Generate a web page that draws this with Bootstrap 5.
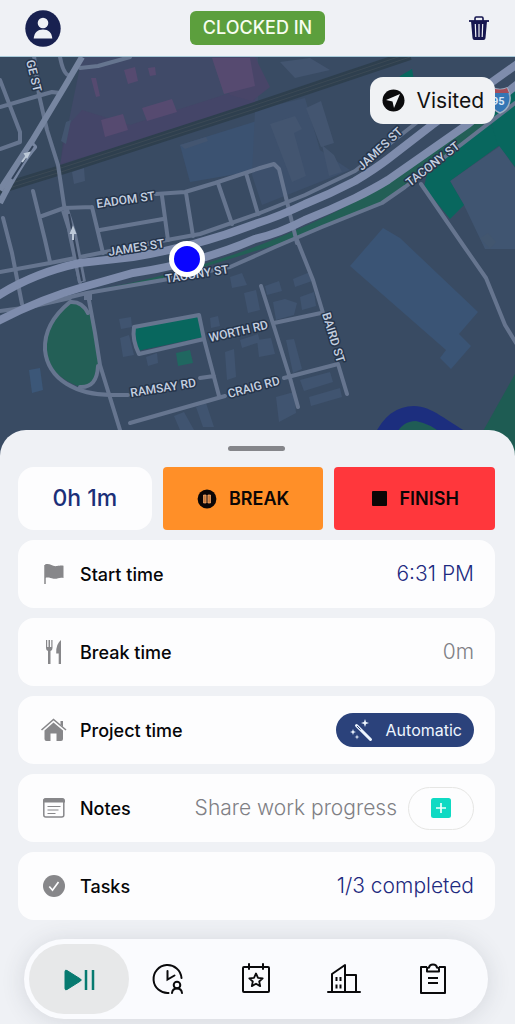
<!DOCTYPE html>
<html lang="en">
<head>
<meta charset="utf-8">
<meta name="viewport" content="width=device-width, initial-scale=1">
<title>Time clock</title>
<link href="https://cdn.jsdelivr.net/npm/bootstrap@5.3.0/dist/css/bootstrap.min.css" rel="stylesheet">
<style>
  body { background: #eff1f5; color: #060608; font-family: Inter, "Liberation Sans", sans-serif; }
  .top-bar { display: grid; grid-template-columns: 1fr auto 1fr; height: 57px; padding: 0 25px; border-bottom: 1px solid #a9cbda; }
  .icon-btn { background: none; border: 0; padding: 0; line-height: 0; color: inherit; }
  .status-pill { background: #5c9f3d; color: #f7fdf0; font-size: 18px; font-weight: 500; line-height: 34px; padding: 0 13px; border-radius: 6px; }
  .map-area { min-height: 300px; margin-bottom: -26px; background: #394b63; }
  .map-area > svg { position: absolute; inset: 0; width: 100%; height: 100%; }
  .visited { position: absolute; top: 20px; right: 20px; height: 47px; padding: 0 11px 0 12px; gap: 11px; border: 0; border-radius: 13px; background: #f0f2f4; color: #111; font-size: 21px; }
  .sheet { position: relative; background: #eff1f5; border-radius: 26px 26px 0 0; padding: 16px 20px 5px 18px; }
  .handle { width: 57px; height: 5px; border-radius: 3px; background: #85868a; }
  .clock-row { display: grid; grid-template-columns: 5fr 6fr 6fr; gap: 11px; }
  .clock-row > * { height: 63px; }
  .timer { background: #fdfdfe; border-radius: 16px; color: #1b2f78; font-size: 23px; font-weight: 500; }
  .clock-btn { border: 0; border-radius: 4px; font-size: 18px; font-weight: 600; gap: 12px; color: #0b0606; }
  .btn-break { background: #ff8f28; }
  .btn-finish { background: #ff373c; }
  .rows-list { gap: 10px; margin-top: 10px; }
  .info-row { height: 68px; border-radius: 16px; background: #fdfdfe; padding: 0 21px 0 22px; }
  .info-row > svg { flex: none; width: 28px; height: 28px; color: #87878a; }
  .info-label { margin-left: 12px; font-size: 18px; font-weight: 500; }
  .info-value { font-size: 21px; font-weight: 300; color: #1e2a80; }
  .muted-value { color: #808085; }
  .auto-btn { height: 34px; border: 0; border-radius: 17px; background: #2b427b; color: #eef6ff; font-size: 16px; padding: 0 12px; gap: 13px; }
  .add-btn { width: 66px; height: 43px; margin-left: 11px; border: 1px solid #e6e6e4; border-radius: 22px; background: #fdfdfe; padding: 0; line-height: 0; }
  .tab-bar { display: grid; grid-template-columns: repeat(5, 1fr); height: 80px; margin: 19px 7px 0 6px; padding: 5px 11px; border-radius: 40px; background: #fafbfe; box-shadow: 0 2px 24px rgba(60, 64, 75, .14); }
  .tab-bar button { border: 0; background: none; padding: 0; color: #0a0a0c; }
  .tab-bar .tab-on { margin: 0 -6px; border-radius: 35px; background: #e7e8e9; color: #077a70; }
  .street { font: 500 12px Roboto, sans-serif; fill: #c5d0e0; stroke: #26354a; stroke-width: 3px; stroke-linejoin: round; paint-order: stroke; }
</style>
</head>
<body>
<div class="d-flex flex-column min-vh-100">
  <header class="top-bar align-items-center">
    <button class="icon-btn justify-self-start me-auto" type="button" aria-label="Profile">
      <svg width="36" height="37" viewBox="0 0 36 37"><ellipse cx="18" cy="18.500" rx="17.700" ry="18.300" fill="#182150"/><circle cx="18" cy="13" r="5.300" fill="#eff1f5"/><path d="M8.700 28.500c.5-6 4-9 9.300-9s8.800 3 9.300 9z" fill="#eff1f5"/></svg>
    </button>
    <div class="status-pill">CLOCKED IN</div>
    <button class="icon-btn ms-auto" type="button" aria-label="Delete">
      <svg width="22" height="26" viewBox="0 0 22 26" fill="none" stroke="#16164f"><path d="M1 6h20" stroke-width="1.800"/><path d="M7 6V3.200Q7 2 8.200 2h5.600Q15 2 15 3.200V6" stroke-width="1.600"/><path d="M3 6h16l-1.500 17q-.2 2-2 2h-9q-1.800 0-2-2z" fill="#16164f" stroke="none"/><path d="M7.300 9l.5 13M11 9v13M14.700 9l-.5 13" stroke="#eff1f5" stroke-width="1.200"/></svg>
    </button>
  </header>

  <main class="map-area position-relative flex-grow-1 overflow-hidden">
    <svg viewBox="0 57 515 399" preserveAspectRatio="xMidYMin slice" role="img" aria-label="Map">
      <rect y="50" width="515" height="420" fill="#394b63"/>
      <!-- districts -->
      <path d="M0 57H260L200 108 0 188Z" fill="#37495f"/>
      <path d="M82 57H258V106L60 164Z" fill="#404a68"/>
      <path d="M64 130 82 110 130 125 255 85V108L60 168Z" fill="#473f67" opacity=".5"/>
      <path d="M212 57h43l15 30-18 14-22-6z" fill="#484568"/>
      <path d="M180 145 260 120V170L190 182Z" fill="#3b5271"/>
      <path d="M255 110 305 98 320 150 350 170 262 205 252 175Z" fill="#3d506c"/>
      <g fill="#564a70"><path d="M101 120l22-6 5 16-23 7zM212 58h38l5 28-31 8zM142 108l30-9 5 13-30 9zM124 70l11-3 3 14-10 3zM148 68l7-1 1 8-6 1zM91 78h5l4 18-4 1z"/></g>
      <g fill="#435570"><path d="M180 145l26-8 2 4-23 8zM270 124l25-8 7 13-8 4 12 43-14 6zM306 108l15-7 13 42-13 4zM322 145l12 10 8 17-13 4zM280 62l30-4 20 12-35 8zM72 172l12-4 1 13-11 3zM66 122l5-2-5 24-5-3z"/></g>
      <g fill="#405470"><path d="M119 319l12-2 1 10-11 2zM120 338l9-3 5 20-11 2zM230 277l12-4 5 12-15 3zM244 293l12-3 4 20-12 3zM265 286l14-5 3 10-15 4zM273 302l12-3 12 4-3 12-18 5zM293 279l17-7 2 9-17 6zM300 297l14-5 2 14-14 4zM257 340l14-2 4 16-16 3zM286 340l8-1 8 30-9 4zM276 397l18-5 2 21-17 9zM300 380l30-8 3 10-29 9zM309 397l31-9 2 9-31 9zM225 352l9-3 2 28-9 3zM240 340l18-6 2 8-18 6zM174 416l10-4 10 18h-14zM196 407l10-4 8 24h-11zM210 318l8-2 2 10-9 2zM146 357l11-4 1 10-10 3z"/></g>
      <path d="M29 370l11-2 3 22-11 3z" fill="#3c5778"/>
      <path d="M350 266 383 228 400 238 478 312 459 334 471 346 451 369 440 358 446 350Z" fill="#3a5475"/>
      <path d="M450 181 500 146 515 168V249H485L464 205Z" fill="#405571"/>
      <path d="M480 238l8-5 8 9-6 7z" fill="#42566f"/>
      <!-- parks -->
      <path d="M430 160 490 121 500 145 450 181 464 205 450 219 424 187Z" fill="#08675e"/>
      <path d="M490 118 515 90V167L497 143Z" fill="#08675e"/>
      <path d="M400 76 412 69 414 80H398Z" fill="#08675e"/>
      <path d="M95 290Q190 273 270 241T395 177L470 122 490 118 462 146 405 188 380 203 275 245 165 279Z" fill="#235f56"/>
      <path d="M70 302C54 315 44 330 45 350Q48 375 80 387 97 386 98 366V340L90 313Q83 301 70 302Z" fill="#235f56"/>
      <path d="M134 327 199 315 204 337 137 351Z" fill="#08675e"/>
      <path d="M176 353l14-3 3 13-15 3z" fill="#18705f" opacity=".75"/>
      <path d="M374 436Q388 406 414 406C432 406 446 421 474 436V456H370Z" fill="#1c2e7e"/>
      <path d="M395 436Q402 421 416 421 431 424 442 434V456H390Z" fill="#1f5c55"/>
      <path d="M515 374 478 440V460H515Z" fill="#1e5c53"/>
      <!-- rail line -->
      <g fill="none"><path d="M-4 190 64 169 255 107 410 55" stroke="#2e3f4e" stroke-width="10"/><path d="M-4 188 64 167 255 105 410 53M-4 192 64 171 255 109 410 57" stroke="#3b4955" stroke-width="1"/></g>
      <!-- local streets -->
      <g fill="none" stroke="#66758f" stroke-width="4" stroke-linecap="round" stroke-linejoin="round">
        <path d="M0 107 38 96 52 92 60 93M0 80 20 132V142L0 149M60 57Q63 73 68 75M80 68 98 66 130 57M34 56 39 95 47 130 58 165 64 205 76 248 83 280"/>
        <path d="M42 216 64 208 92 207M33 191 45 240 50 262M3 218 12 253 22 304M92 207 103 253M100 230 163 219M156 194 185 192 215 183 260 168 274 164 279 169 297 243M162 196 168 240M186 193 193 236M218 183 232 224M246 173 258 214M66 210 70 235 80 282"/>
        <path d="M0 272 50 263 100 253 167 240 200 234 260 213 305 195 355 171 420 120"/>
        <path d="M50 302 87 293 163 280 230 267 275 247 322 227 382 203 405 187 462 144 515 103"/>
        <path d="M0 311 30 307 70 298M88 295 95 333 100 365 120 430"/>
        <path d="M88 313Q82 301 70 302C54 315 44 330 45 350 48 380 77 395 112 395H128M80 387Q97 388 98 366"/>
        <path d="M134 327 199 315 204 339 139 354Q132 340 134 327ZM204 339 219 396M200 378 214 376M130 423 225 396"/>
        <path d="M261 286 275 330 290 378 298 407M297 240 313 280 323 313M274 323 321 313M284 378 338 364M338 364 347 394M421 184 463 245 486 278 505 325 516 343"/>
      </g>
      <g fill="none" stroke="#7786a1" stroke-width="6" stroke-linejoin="round"><path d="M82 57 65 86 32 141 0 190"/><path d="M30 143 34 147Q20 163 0 203"/></g>
      <g fill="none" stroke="#66758f" stroke-width="8"><path d="M65 210 73 235 82 282M88 293V300"/></g>
      <path d="M33 146 12 179M69 214 82 281" stroke="#33435a" stroke-width="2"/>
      <!-- highway -->
      <g fill="none" stroke="#7e8cac" stroke-width="8"><path d="M-4 297Q33 273 80 263L133 257Q195 247 255 224 280 216 305 204 330 194 355 181 375 169 388 159L432 125 520 62"/><path d="M-4 322Q43 298 83 287L133 273Q200 263 255 239 280 233 305 220 330 210 355 198 375 188 388 180L468 124 520 82"/></g>
      <path d="M22 162l5-7M73 240v-9M25 154l4-1-2 4zM73 228l-2 5h4z" stroke="#bdc9d8" stroke-width="2" fill="none"/>
      <!-- interstate shield -->
      <path d="M493 88q7 3 14 0 5 8 2 16-2 6-9 9-7-3-9-9-2-8 2-16z" fill="#3476b5" stroke="#a1b0c3" stroke-width="1.500"/><path d="M493 88q7 3 14 0l2 5h-18z" fill="#a54d59"/><text x="492" y="105" font-family="Roboto, sans-serif" font-weight="700" font-size="11" fill="#dae7f5">95</text>
      <g class="street">
        <text transform="translate(97 208) rotate(-8)">EADOM ST</text>
        <text transform="translate(109 256) rotate(-9)">JAMES ST</text>
        <text transform="translate(166 283) rotate(-9)">TACONY ST</text>
        <text transform="translate(362 171) rotate(-43)">JAMES ST</text>
        <text transform="translate(410 187) rotate(-38)">TACONY ST</text>
        <text transform="translate(210 342) rotate(-13)">WORTH RD</text>
        <text transform="translate(131 397) rotate(-9)">RAMSAY RD</text>
        <text transform="translate(229 398) rotate(-15)">CRAIG RD</text>
        <text transform="translate(322 314) rotate(73)">BAIRD ST</text>
        <text transform="translate(26 61) rotate(76)">GE ST</text>
      </g>
      <circle cx="187" cy="259" r="15.500" fill="#0a05ff" stroke="#fff" stroke-width="5"/>
    </svg>
    <button class="visited d-flex align-items-center" type="button">
      <svg width="23" height="23" viewBox="0 0 23 23"><circle cx="11.500" cy="11.500" r="11" fill="#0b0b0c"/><path d="M18 5 4 11l6.500 1.500L12 19z" fill="#f0f2f4"/></svg>
      Visited
    </button>
  </main>

  <section class="sheet">
    <div class="handle mx-auto"></div>
    <div class="clock-row mt-3">
      <div class="timer d-flex align-items-center justify-content-center">0h 1m</div>
      <button class="clock-btn btn-break d-flex align-items-center justify-content-center" type="button">
        <svg width="20" height="20" viewBox="0 0 20 20"><circle cx="10" cy="10" r="9.400" fill="#0b0606"/><path d="M6.500 6h2.600v8H6.500zM10.900 6h2.600v8h-2.600z" fill="#c87a3b" stroke="#ffb070" stroke-width=".7"/></svg>
        BREAK
      </button>
      <button class="clock-btn btn-finish d-flex align-items-center justify-content-center" type="button">
        <svg width="17" height="17" viewBox="0 0 17 17"><rect x="1" y="1" width="15" height="15" rx="1" fill="#0b0606"/></svg>
        FINISH
      </button>
    </div>

    <div class="d-grid rows-list">
      <div class="info-row d-flex align-items-center">
        <svg viewBox="0 0 28 28"><path d="M5 24V5" stroke="currentColor" stroke-width="1.500"/><path d="M5 4.500c5-2 7 2.500 12 1.500 3-.7 4.500-.8 6.500-.3V18c-5-1-6 1.500-10 .7-3.500-.7-5-1.700-8.500-.7z" fill="currentColor"/></svg>
        <span class="info-label">Start time</span>
        <span class="info-value ms-auto">6:31 PM</span>
      </div>
      <div class="info-row d-flex align-items-center">
        <svg viewBox="0 0 28 28" fill="currentColor"><path d="M6 2h1.200v7h1.300V2h1.500v7h1.300V2h1.200v8q0 2.500-2 3v13H8V13q-2-.5-2-3zM21 2v24h-2.300V15.500h-2.500q-.5-9.500 4.800-13.500z"/></svg>
        <span class="info-label">Break time</span>
        <span class="info-value muted-value ms-auto">0m</span>
      </div>
      <div class="info-row d-flex align-items-center">
        <svg viewBox="0 0 28 28"><path d="M1.500 14 13.500 3.500 26 14" fill="none" stroke="currentColor" stroke-width="1.600"/><path d="M20.500 8.500V5H23v6" fill="currentColor"/><path d="m4.500 14.500 9-8 9.500 8V23q0 2-2 2h-4.500v-7.500h-6V25h-4q-2 0-2-2z" fill="currentColor"/></svg>
        <span class="info-label">Project time</span>
        <button class="auto-btn d-flex align-items-center ms-auto" type="button">
          <svg width="25" height="25" viewBox="0 0 25 25" fill="#eef6ff"><path d="m8.500 7.500 14 14" stroke="#eef6ff" stroke-width="3" stroke-linecap="round"/><path d="m9 8 3.500 3.500" stroke="#2b427b"/><path d="M17 1l1 3 3 1-3 1-1 3-1-3-3-1 3-1zM5 11l.8 2.200L8 14l-2.200.8L5 17l-.8-2.200L2 14l2.200-.8zM9 16.500l.6 1.900 1.900.6-1.900.6L9 21.500l-.6-1.900-1.900-.6 1.900-.6z"/></svg>
          Automatic
        </button>
      </div>
      <div class="info-row d-flex align-items-center">
        <svg viewBox="0 0 28 28" fill="none" stroke="currentColor" stroke-width="1.500"><rect x="3.800" y="5" width="20" height="18" rx="2"/><path d="M3 7q0-3 3-3h16q3 0 3 3v1.500H3z" fill="currentColor" stroke="none"/><path d="M7.500 12.500h13M7.500 16h11M7.500 19.500h8" stroke-width="1.200"/></svg>
        <span class="info-label">Notes</span>
        <span class="info-value muted-value ms-auto">Share work progress</span>
        <button class="add-btn" type="button" aria-label="Add note">
          <svg width="20" height="20" viewBox="0 0 20 20"><rect width="20" height="20" rx="2.500" fill="#0fdac3"/><path d="M10 5v10M5 10h10" stroke="#f0fffc" stroke-width="1.700"/></svg>
        </button>
      </div>
      <div class="info-row d-flex align-items-center">
        <svg viewBox="0 0 28 28"><circle cx="14" cy="14" r="11" fill="currentColor"/><path d="m9.300 14.500 3.200 3.700 6-8.200" fill="none" stroke="#fdfdfe" stroke-width="1.700"/></svg>
        <span class="info-label">Tasks</span>
        <span class="info-value ms-auto">1/3 completed</span>
      </div>
    </div>

    <nav class="tab-bar" aria-label="Main">
      <button class="tab-on" type="button" aria-label="Clock">
        <svg width="32" height="24" viewBox="0 0 32 24"><path d="M2 3.500Q2 1.500 4 2.500L17.500 11q1.500 1 0 2L4 21.500q-2 1-2-1z" fill="currentColor" stroke="currentColor"/><path d="M23 2v20M30 2v20" stroke="currentColor" stroke-width="2.500"/></svg>
      </button>
      <button type="button" aria-label="Timesheets">
        <svg width="32" height="32" viewBox="0 0 32 32" fill="none" stroke="currentColor" stroke-width="2" stroke-linecap="round"><path d="M16.500 30A14 14 0 1 1 29.500 15"/><path d="M15.500 8v8.500l7-4"/><circle cx="25" cy="22" r="3.300"/><path d="M20 30q.5-4.500 5-4.500t5 4.500"/></svg>
      </button>
      <button type="button" aria-label="Schedule">
        <svg width="32" height="32" viewBox="0 0 32 32" fill="none" stroke="currentColor" stroke-width="2" stroke-linejoin="round"><rect x="3" y="4" width="26" height="25" rx="1"/><path d="M9 1v5M23 1v5" stroke-linecap="round"/><path d="m16 10.500 2 4.300 4.700.5-3.500 3.200 1 4.600-4.200-2.400-4.200 2.400 1-4.600-3.500-3.200 4.700-.5z" stroke-width="1.800"/></svg>
      </button>
      <button type="button" aria-label="Projects">
        <svg width="34" height="32" viewBox="0 0 34 32" fill="none" stroke="currentColor" stroke-width="2" stroke-linejoin="round" stroke-linecap="round"><path d="M1 29h32M5 29V11L18 2v27M18 12h11v17"/><path d="M9.500 14v4M13.500 14v4M9.500 21.500v4M13.500 21.500v4" stroke-linecap="butt"/></svg>
      </button>
      <button type="button" aria-label="Forms">
        <svg width="28" height="32" viewBox="0 0 28 32" fill="none" stroke="currentColor" stroke-width="2" stroke-linejoin="round"><path d="M8 4H2v26h24V4h-6"/><path d="M8 8.500V6q0-1.500 2-1.500.5-3 4-3t4 3q2 0 2 1.500v2.500z"/><path d="M9 15h10M9 20h10"/></svg>
      </button>
    </nav>
  </section>
</div>
<script src="https://cdn.jsdelivr.net/npm/bootstrap@5.3.0/dist/js/bootstrap.bundle.min.js"></script>
</body>
</html>
